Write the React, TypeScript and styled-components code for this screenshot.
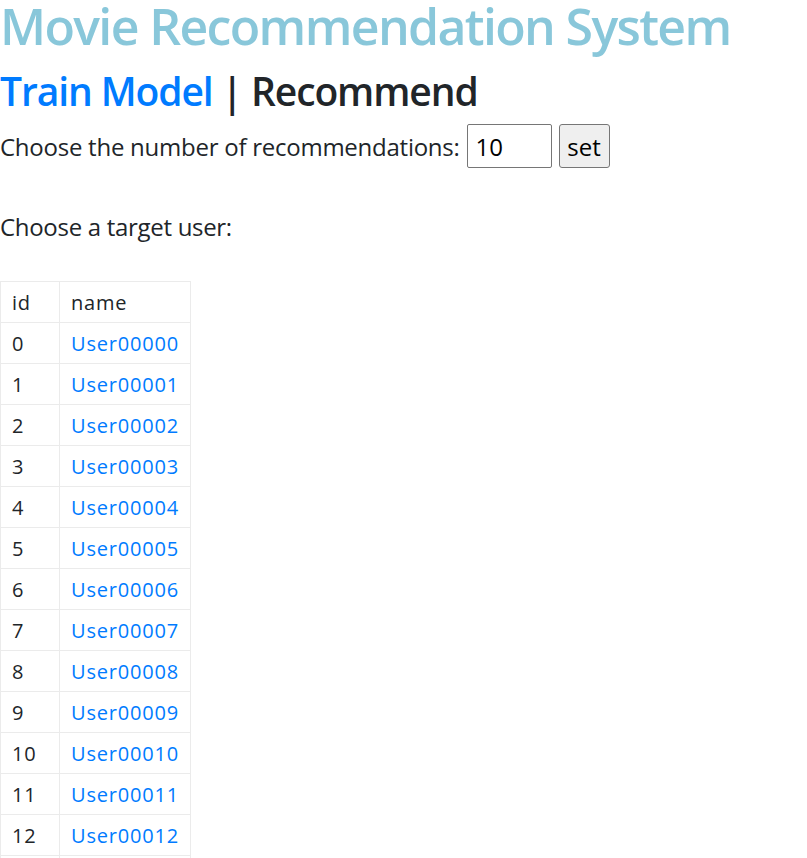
import React, { useState } from "react";
import styled, { createGlobalStyle } from "styled-components";

const GlobalStyle = createGlobalStyle`
  body {
    margin: 0;
    font-family: "Open Sans", "Noto Sans", "Liberation Sans", sans-serif;
    color: #212529;
    background: #fff;
  }
`;

// Styled Components
const Title = styled.h1`
  margin: 0 0 14px;
  font-size: 50px;
  font-weight: 600;
  line-height: 53px;
  color: #89c7da;
  letter-spacing: -1.65px;
  white-space: nowrap;
`;

const Nav = styled.h2`
  margin: 0;
  font-size: 39px;
  font-weight: 600;
  line-height: 48px;
  letter-spacing: -1.1px;
  white-space: nowrap;
`;

const NavLink = styled.a<{ $active?: boolean }>`
  color: ${(p) => (p.$active ? "#212529" : "#007bff")};
  text-decoration: none;
`;

const Row = styled.div`
  display: flex;
  align-items: center;
  gap: 7px;
  margin-top: 9px;
  height: 44px;
  font-size: 24px;
  letter-spacing: -0.25px;
`;

const NumberInput = styled.input`
  box-sizing: border-box;
  width: 85px;
  height: 44px;
  padding: 0 8px;
  font-family: inherit;
  font-size: 24px;
  color: #000;
  border: 1px solid #767676;
  border-radius: 2px;
`;

const SetButton = styled.button`
  box-sizing: border-box;
  width: 51px;
  height: 44px;
  padding: 0;
  font-family: inherit;
  font-size: 24px;
  color: #000;
  background: #efefef;
  border: 1px solid #767676;
  border-radius: 3px;
`;

const Prompt = styled.p`
  margin: 41px 0 0;
  font-size: 24px;
  line-height: 36px;
  letter-spacing: -0.3px;
`;

const UserTable = styled.table`
  margin-top: 36px;
  border-collapse: collapse;
  font-size: 20px;
  letter-spacing: 0.8px;
`;

const Cell = styled.td<{ $wide?: boolean }>`
  box-sizing: border-box;
  width: ${(p) => (p.$wide ? "130px" : "59px")};
  height: 41px;
  padding: 0 11px;
  border: 1px solid #ebebeb;
  text-align: left;
  vertical-align: middle;
  font-weight: 400;
`;

const UserLink = styled.a`
  color: #007bff;
  text-decoration: none;
`;

const users = Array.from({ length: 20 }, (_, i) => ({
  id: i,
  name: "User" + String(i).padStart(5, "0"),
}));

const App: React.FC = () => {
  const [count, setCount] = useState<string>("10");

  return (
    <>
      <GlobalStyle />
      <Title>Movie Recommendation System</Title>
      <Nav>
        <NavLink href="#">Train Model</NavLink> | <NavLink $active href="#">Recommend</NavLink>
      </Nav>
      <Row>
        <span>Choose the number of recommendations:</span>
        <NumberInput type="text" value={count} onChange={(e) => setCount(e.target.value)} />
        <SetButton>set</SetButton>
      </Row>
      <Prompt>Choose a target user:</Prompt>
      <UserTable>
        <thead>
          <tr>
            <Cell as="th">id</Cell>
            <Cell as="th" $wide>name</Cell>
          </tr>
        </thead>
        <tbody>
          {users.map((u) => (
            <tr key={u.id}>
              <Cell>{u.id}</Cell>
              <Cell $wide>
                <UserLink href="#">{u.name}</UserLink>
              </Cell>
            </tr>
          ))}
        </tbody>
      </UserTable>
    </>
  );
};

export default App;
